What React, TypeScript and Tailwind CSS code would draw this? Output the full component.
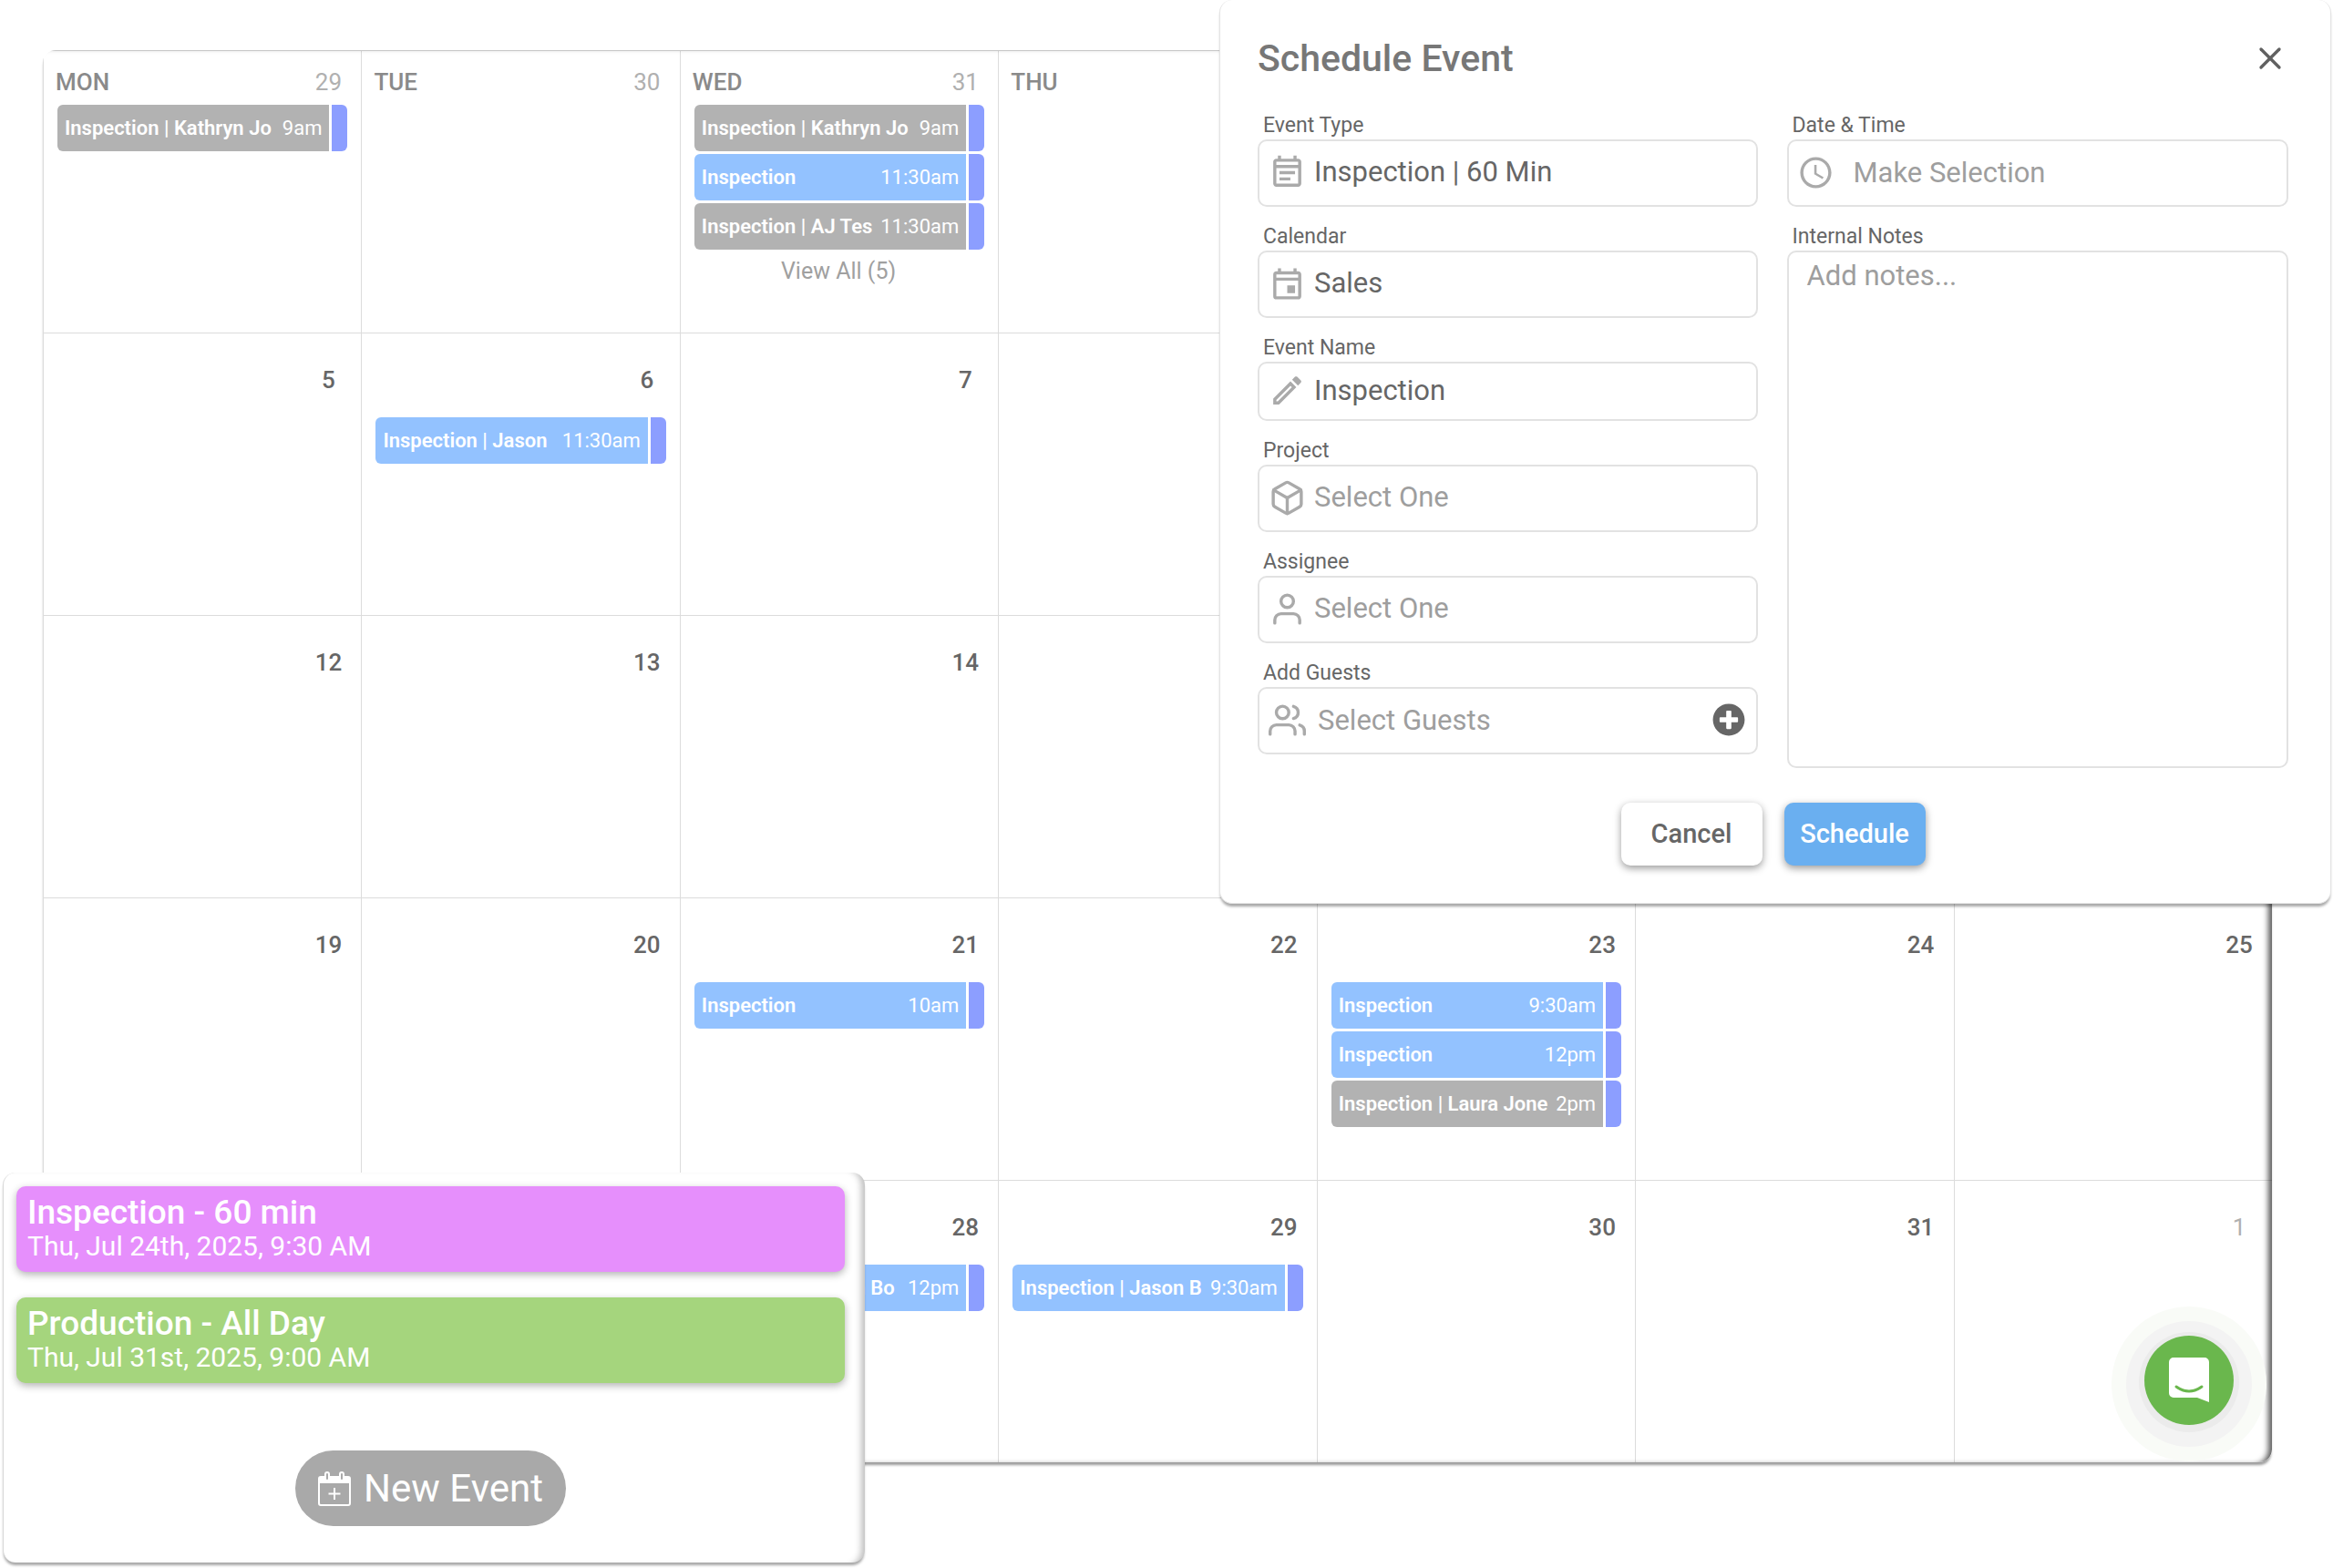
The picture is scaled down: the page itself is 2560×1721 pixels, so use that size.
import React, { useState } from 'react';
import { X } from 'lucide-react';
import { FiBox, FiUser, FiUsers } from 'react-icons/fi';
import { MdOutlineEventNote, MdOutlineEvent, MdOutlineEdit, MdAccessTime } from 'react-icons/md';
import { FaPlusCircle } from 'react-icons/fa';
import clsx from 'clsx';

type CalendarEvent = { title: string; time: string; done?: boolean };
type Day = { date?: string; weekday?: string; muted?: boolean; events?: CalendarEvent[]; more?: number };

const weeks: Day[][] = [
  [
    { weekday: 'MON', date: '29', muted: true, events: [{ title: 'Inspection | Kathryn Jo', time: '9am', done: true }] },
    { weekday: 'TUE', date: '30', muted: true },
    {
      weekday: 'WED',
      date: '31',
      muted: true,
      more: 5,
      events: [
        { title: 'Inspection | Kathryn Jo', time: '9am', done: true },
        { title: 'Inspection', time: '11:30am' },
        { title: 'Inspection | AJ Tes', time: '11:30am', done: true },
      ],
    },
    { weekday: 'THU' },
    {},
    {},
    {},
  ],
  [
    { date: '5' },
    { date: '6', events: [{ title: 'Inspection | Jason', time: '11:30am' }] },
    { date: '7' },
    {},
    {},
    {},
    {},
  ],
  [{ date: '12' }, { date: '13' }, { date: '14' }, {}, {}, {}, {}],
  [
    { date: '19' },
    { date: '20' },
    { date: '21', events: [{ title: 'Inspection', time: '10am' }] },
    { date: '22' },
    {
      date: '23',
      events: [
        { title: 'Inspection', time: '9:30am' },
        { title: 'Inspection', time: '12pm' },
        { title: 'Inspection | Laura Jone', time: '2pm', done: true },
      ],
    },
    { date: '24' },
    { date: '25' },
  ],
  [
    {},
    {},
    { date: '28', events: [{ title: 'Inspection | Jason Bo', time: '12pm' }] },
    { date: '29', events: [{ title: 'Inspection | Jason B', time: '9:30am' }] },
    { date: '30' },
    { date: '31' },
    { date: '1', muted: true },
  ],
];

const upcoming = [
  { title: 'Inspection - 60 min', when: 'Thu, Jul 24th, 2025, 9:30 AM', color: 'bg-[#e68ffc]' },
  { title: 'Production - All Day', when: 'Thu, Jul 31st, 2025, 9:00 AM', color: 'bg-[#a5d57d]' },
];

function EventChip({ title, time, done }: CalendarEvent) {
  return (
    <button type="button" className="flex h-[51px] w-full gap-[3px] text-left text-[22px] leading-7 text-white">
      <span className={clsx('flex h-full min-w-0 flex-1 items-center gap-[6px] rounded-l-md px-2', done ? 'bg-[#b2b2b2]' : 'bg-[#93c2ff]')}>
        <span className="min-w-0 flex-1 overflow-hidden font-semibold whitespace-nowrap">{title}</span>
        <span>{time}</span>
      </span>
      <span className="h-full w-[17px] rounded-r-md bg-[#8c9eff]" />
    </button>
  );
}

function DayCell({ day }: { day: Day }) {
  return (
    <div className="flex min-w-0 flex-col border-t border-l border-[#dcdcdc] pr-[15px] pl-[13px]">
      <div
        className={clsx(
          'flex justify-between text-[26px] leading-8 font-medium',
          day.weekday ? 'pt-[18px] pb-[9px]' : 'pt-[35px] pb-[25px]'
        )}
      >
        <span className="text-[#8a8a8a]">{day.weekday}</span>
        <span
          className={clsx(
            'mr-[5px] w-8 text-center',
            day.muted ? 'font-normal text-[#b0b0b0]' : 'text-[#666666]'
          )}
        >
          {day.date}
        </span>
      </div>
      <div className="flex flex-col gap-[3px] pl-[2px]">
        {day.events?.map((event, i) => <EventChip key={i} {...event} />)}
      </div>
      {day.more && (
        <button type="button" className="mt-[9px] self-center text-[25px] leading-[30px] text-[#a0a0a0]">
          View All ({day.more})
        </button>
      )}
    </div>
  );
}

function CalendarPlusIcon() {
  return (
    <svg viewBox="0 0 36 38" className="h-[38px] w-9" fill="none" stroke="currentColor" strokeWidth="2" aria-hidden="true">
      <rect x="1" y="6" width="34" height="31" rx="2" />
      <path d="M1 6h34v7H1z" fill="currentColor" stroke="none" />
      <rect x="8" y="1" width="4" height="9" rx="2" fill="#a9a9a9" />
      <rect x="24" y="1" width="4" height="9" rx="2" fill="#a9a9a9" />
      <path d="M18 18v13M11.5 24.5h13" />
    </svg>
  );
}

type FieldProps = {
  id: string;
  label: string;
  icon: React.ReactNode;
  children: React.ReactNode;
  short?: boolean;
};

function Field({ id, label, icon, children, short }: FieldProps) {
  return (
    <div>
      <label htmlFor={id} className="block pl-[6px] text-[23px] leading-[30px] text-[#666666]">
        {label}
      </label>
      <div
        className={clsx(
          'flex items-center rounded-[10px] border-2 border-[#e2e2e2] pr-3 pb-[2px] text-[31px] text-[#666666]',
          short ? 'h-[65px]' : 'h-[74px]'
        )}
      >
        <span className="flex w-[60px] shrink-0 justify-center text-[#aaaaaa]">{icon}</span>
        {children}
      </div>
    </div>
  );
}

const control = 'h-full min-w-0 flex-1 appearance-none bg-transparent outline-none placeholder:text-[#9e9e9e]';

function ScheduleDialog() {
  const [name, setName] = useState('Inspection');

  return (
    <form
      aria-labelledby="schedule-title"
      onSubmit={(e) => e.preventDefault()}
      className="absolute top-0 right-[2px] w-[1220px] rounded-[14px] border border-t-0 border-[#e4e4e4] bg-white pt-[38px] pr-[46px] pb-[41px] pl-[41px] shadow-[0_4px_3px_-1px_rgba(0,0,0,0.35)]"
    >
      <div className="flex items-center justify-between">
        <h2 id="schedule-title" className="text-[41px] leading-[52px] font-medium text-[#777777]">Schedule Event</h2>
        <button type="button" aria-label="Close" className="text-[#606060]">
          <X size={40} strokeWidth={2} />
        </button>
      </div>

      <div className="mt-[33px] grid grid-cols-[549fr_551fr] gap-8">
        <div className="flex flex-col gap-[18px]">
          <Field id="type" label="Event Type" icon={<MdOutlineEventNote size={41} />}>
            <select id="type" className={control}>
              <option>Inspection | 60 Min</option>
            </select>
          </Field>
          <Field id="calendar" label="Calendar" icon={<MdOutlineEvent size={41} />}>
            <select id="calendar" className={control}>
              <option>Sales</option>
            </select>
          </Field>
          <Field id="name" label="Event Name" icon={<MdOutlineEdit size={41} />} short>
            <input id="name" value={name} onChange={(e) => setName(e.target.value)} className={control} />
          </Field>
          <Field id="project" label="Project" icon={<FiBox size={41} />}>
            <select id="project" className={clsx(control, 'text-[#9e9e9e]')}>
              <option>Select One</option>
            </select>
          </Field>
          <Field id="assignee" label="Assignee" icon={<FiUser size={41} />}>
            <select id="assignee" className={clsx(control, 'text-[#9e9e9e]')}>
              <option>Select One</option>
            </select>
          </Field>
          <Field id="guests" label="Add Guests" icon={<FiUsers size={41} />}>
            <input id="guests" placeholder="Select Guests" className={clsx(control, 'pl-1')} />
            <button type="button" aria-label="Add guest">
              <FaPlusCircle size={36} />
            </button>
          </Field>
        </div>

        <div className="flex flex-col gap-[18px]">
          <Field id="date" label="Date & Time" icon={<MdAccessTime size={41} />}>
            <input id="date" placeholder="Make Selection" className={clsx(control, 'pl-[11px]')} />
          </Field>
          <div>
            <label htmlFor="notes" className="block pl-[6px] text-[23px] leading-[30px] text-[#666666]">
              Internal Notes
            </label>
            <textarea
              id="notes"
              placeholder="Add notes..."
              className="block h-[568px] w-full resize-none rounded-[10px] border-2 border-[#e2e2e2] px-5 py-2 text-[31px] leading-9 text-[#666666] outline-none placeholder:text-[#9e9e9e]"
            />
          </div>
        </div>
      </div>

      <div className="mt-[38px] flex justify-center gap-6 text-[29px] font-medium">
        <button type="button" className="h-[69px] w-[155px] rounded-[10px] bg-white text-[#666666] shadow-[0_3px_8px_rgba(0,0,0,0.4)]">
          Cancel
        </button>
        <button type="submit" className="h-[69px] w-[155px] rounded-[10px] bg-[#6aaff0] text-white shadow-[0_3px_8px_rgba(0,0,0,0.4)]">
          Schedule
        </button>
      </div>
    </form>
  );
}

function UpcomingPanel() {
  return (
    <aside className="absolute bottom-[6px] left-[3px] flex w-[946px] flex-col items-center rounded-[14px] border-l border-[#d8d8d8] bg-white pt-[15px] pr-[22px] pb-10 pl-[14px] shadow-[0_4px_3px_-1px_rgba(0,0,0,0.35),inset_-9px_0_7px_-5px_rgba(0,0,0,0.25)]">
      <ul className="flex w-full flex-col gap-7">
        {upcoming.map((item) => (
          <li key={item.title} className={clsx('h-[94px] rounded-[10px] px-3 pt-[7px] text-white shadow-[0_3px_8px_rgba(0,0,0,0.3)]', item.color)}>
            <p className="text-[37px] leading-[43px] font-medium">{item.title}</p>
            <p className="text-[30px] leading-8">{item.when}</p>
          </li>
        ))}
      </ul>
      <button type="button" className="mt-[74px] flex h-[83px] items-center gap-[14px] rounded-full bg-[#a9a9a9] px-[25px] text-[42px] text-white">
        <CalendarPlusIcon />
        New Event
      </button>
    </aside>
  );
}

function ChatButton() {
  return (
    <button
      type="button"
      aria-label="Open chat"
      className="absolute right-[109px] bottom-[157px] flex size-[98px] items-center justify-center rounded-full bg-[#6ab74d] shadow-[0_2px_0_6px_#ebebeb,0_4px_0_20px_#f3f3f3,0_4px_0_36px_#f9fbf7]"
    >
      <svg viewBox="0 0 44 50" className="h-[50px] w-11" aria-hidden="true">
        <path d="M5 0h34a5 5 0 0 1 5 5v44l-13-5H5a5 5 0 0 1-5-5V5a5 5 0 0 1 5-5z" fill="#fff" />
        <path d="M8 32q14 10 28 0" fill="none" stroke="#6ab74d" strokeWidth="3" strokeLinecap="round" />
      </svg>
    </button>
  );
}

export default function App() {
  return (
    <div className="relative min-h-screen w-full overflow-hidden bg-white pt-[55px] pr-[67px] pb-[116px] pl-[47px] font-['Roboto',sans-serif]">
      {/* Month grid */}
      <main className="relative grid auto-rows-[310px] grid-cols-7 overflow-hidden rounded-[14px] shadow-[0_4px_3px_-1px_rgba(0,0,0,0.4)] after:pointer-events-none after:absolute after:inset-0 after:rounded-[14px] after:shadow-[inset_-7px_0_6px_-3px_rgba(0,0,0,0.65)]">
        {weeks.flat().map((day, i) => <DayCell key={i} day={day} />)}
      </main>

      <ChatButton />
      <UpcomingPanel />
      <ScheduleDialog />
    </div>
  );
}
